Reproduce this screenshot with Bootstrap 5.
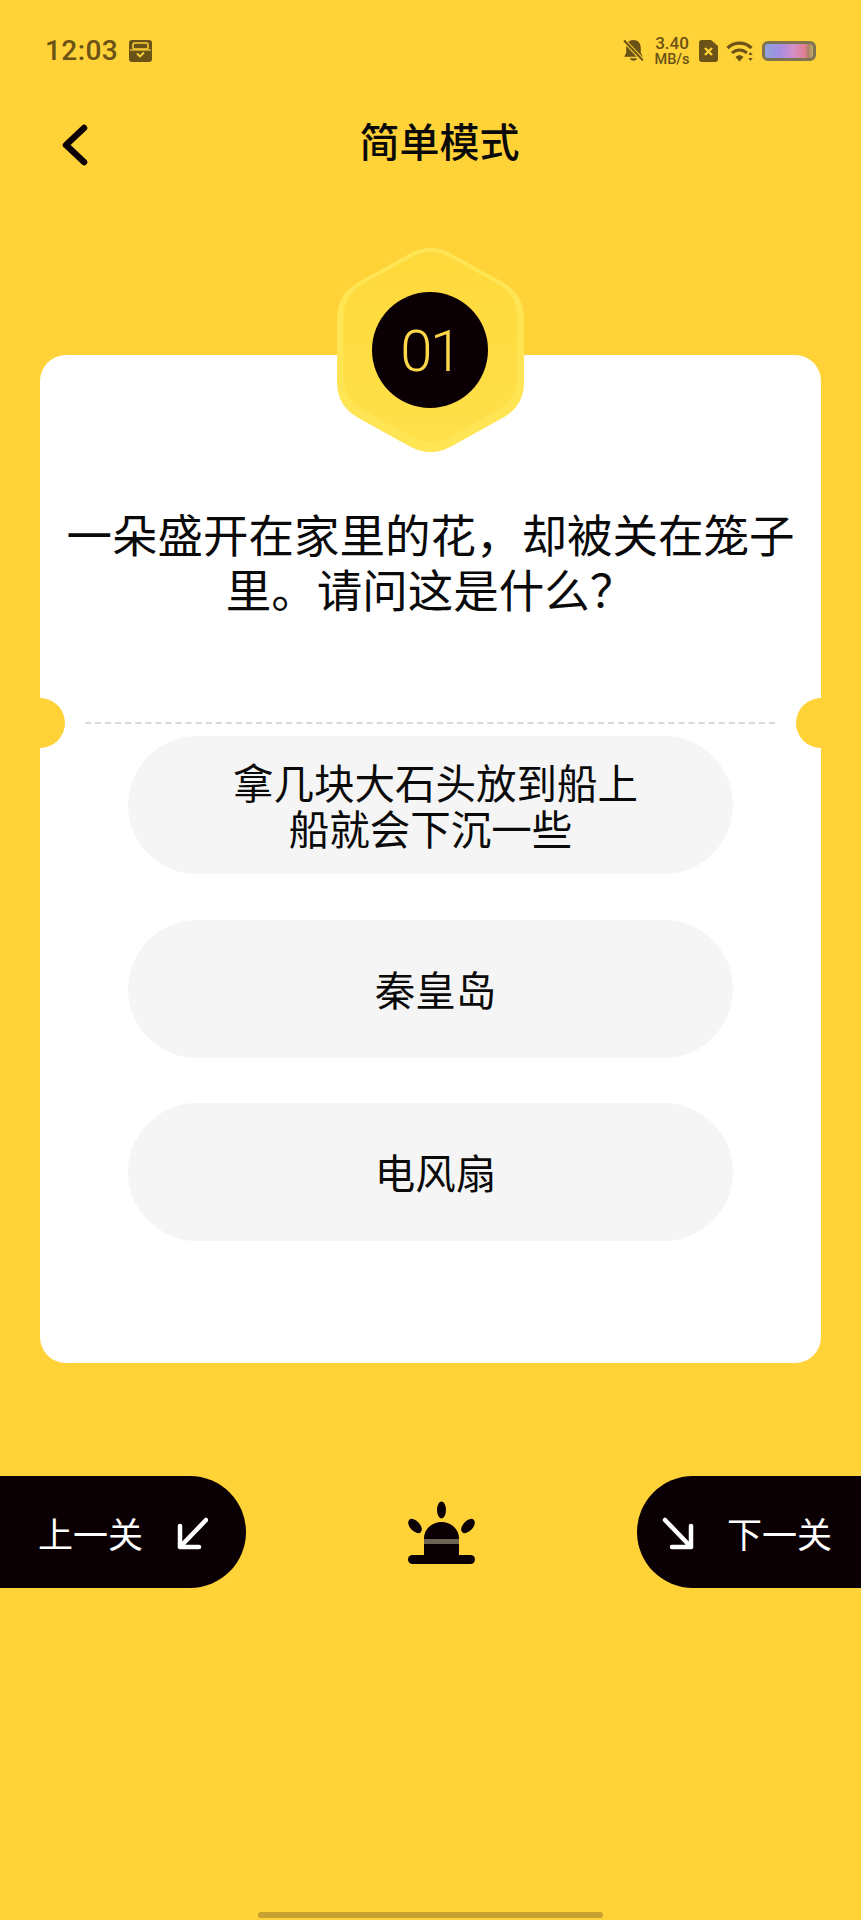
<!DOCTYPE html>
<html lang="zh-CN">
<head>
    <meta charset="UTF-8">
    <meta name="viewport" content="width=device-width, initial-scale=1.0">
    <title>简单模式</title>
    <link href="https://cdn.jsdelivr.net/npm/bootstrap@5.3.0/dist/css/bootstrap.min.css" rel="stylesheet">
    <style>
        :root {
            --bee-yellow: #ffd237;
            --bee-black: #0a0003;
            --bar-brown: #6b5216;
        }
        body {
            background-color: var(--bee-yellow);
            font-family: "Noto Sans CJK SC", "Noto Sans", sans-serif;
            color: #0a0a0a;
        }
        .quiz-page { height: 1920px; }
        .status-strip {
            height: 102px;
            padding: 0 45px 0 45px;
            color: var(--bar-brown);
        }
        .clock-text {
            font-family: Roboto, sans-serif;
            font-weight: 500;
            font-size: 28px;
            line-height: 1;
            letter-spacing: .4px;
        }
        .clock-icon { margin-left: 3px; }
        .speed-text {
            font-family: Roboto, sans-serif;
            font-weight: 500;
            width: 38px;
            text-align: center;
            line-height: 1;
        }
        .speed-text b { display: block; font-weight: 500; font-size: 17px; margin-bottom: 1px; }
        .speed-text i { display: block; font-style: normal; font-size: 14.5px; }
        .battery-box {
            width: 54px;
            height: 20px;
            border: 3px solid #7d7350;
            border-radius: 6px;
            background: linear-gradient(90deg, #8fa3d8 0%, #a48de2 30%, #d18fc8 58%, #e0808f 84%, #a87f68 90%, #c4ab68 100%);
        }
        .title-strip { height: 78px; padding: 0 0 2px 18px; }
        .back-arrow { left: 61px; top: 22px; }
        .page-title {
            font-size: 40px;
            font-weight: 500;
            line-height: 1;
            color: #0a0a0a;
        }
        .quiz-sheet {
            margin: 175px 40px 0;
            height: 1008px;
            padding-top: 151px;
            background: #fff;
            border-radius: 26px;
        }
        .level-hex {
            top: -107px;
            left: 297px;
            width: 187px;
            height: 204px;
        }
        .level-no {
            width: 116px;
            height: 116px;
            top: 44px;
            left: 35px;
            padding-top: 2px;
            background: var(--bee-black);
            color: #ffd84a;
            font-family: Roboto, sans-serif;
            font-weight: 300;
            font-size: 58px;
            letter-spacing: -2.500px;
        }
        .ticket-notch {
            top: 343px;
            width: 25px;
            height: 50px;
            background: var(--bee-yellow);
        }
        .notch-left { left: 0; border-radius: 0 25px 25px 0; }
        .notch-right { right: 0; border-radius: 25px 0 0 25px; }
        .question-text {
            font-size: 45.500px;
            line-height: 55px;
            padding: 0 26px;
        }
        .dash-line {
            margin: 106px 46px 12px 45px;
            border-top: 2px dashed #d9d9d9;
        }
        .answer-list { margin: 0 88px; gap: 45.500px; }
        .answer-pill {
            height: 138px;
            padding-left: 10px;
            background: #f5f5f5;
            border-radius: 69px;
            font-size: 40.500px;
            line-height: 46px;
        }
        .answer-tail { display: block; margin-right: 10px; }
        .bottom-strip { margin-top: 113px; height: 112px; }
        .step-btn {
            height: 112px;
            background: var(--bee-black);
            color: #fff;
            font-size: 35px;
            font-weight: 400;
            line-height: 1;
        }
        .step-btn svg { margin-top: 3px; }
        .step-prev { width: 246px; padding-left: 38px; border-radius: 0 56px 56px 0; gap: 33px; }
        .step-next { width: 224px; padding-left: 25px; border-radius: 56px 0 0 56px; gap: 33px; }
        .home-bar {
            width: 345px;
            height: 6px;
            margin: auto auto 2px 258px;
            background: #c9a032;
            border-radius: 3px;
        }
    </style>
</head>
<body class="m-0">
    <div class="quiz-page d-flex flex-column">
        <!-- status bar -->
        <div class="status-strip d-flex align-items-center justify-content-between">
            <div class="d-flex align-items-center gap-2">
                <span class="clock-text">12:03</span>
                <svg class="clock-icon" width="23" height="22" viewBox="0 0 23 22">
                    <rect width="23" height="22" rx="3" fill="#6b5216"/>
                    <rect x="4" y="3" width="15" height="6" rx="1.500" fill="none" stroke="#ffd237" stroke-width="1.500"/>
                    <path d="M1 10h21" stroke="#ffd237" stroke-width="1.200"/>
                    <path d="M8 13.500l3 3 4-4" fill="none" stroke="#ffd237" stroke-width="1.800"/>
                </svg>
            </div>
            <div class="d-flex align-items-center">
                <svg width="23" height="24" viewBox="0 0 21 23">
                    <path d="M10.500 1c4.500 0 7 3.200 7 7.500v5l2 3.500H1.500l2-3.500v-5C3.500 4.200 6 1 10.500 1z" fill="#6b5216"/>
                    <path d="M7 18.500c.5 3 6.500 3 7 0z" fill="#6b5216"/>
                    <path d="M1.500 1.500l18 19" stroke="#ffd237" stroke-width="4"/>
                    <path d="M1.500 1.500l18 19" stroke="#6b5216" stroke-width="2"/>
                </svg>
                <div class="speed-text ms-2">
                    <b>3.40</b>
                    <i>MB/s</i>
                </div>
                <svg class="ms-2" width="19" height="22" viewBox="0 0 19 22">
                    <path d="M3 0h9l7 6v13a3 3 0 0 1-3 3H3a3 3 0 0 1-3-3V3a3 3 0 0 1 3-3z" fill="#6b5216"/>
                    <path d="M6 8l7 7M13 8l-7 7" stroke="#ffd237" stroke-width="2.400"/>
                </svg>
                <svg class="ms-2" width="28" height="21" viewBox="0 0 28 21">
                    <path d="M1.500 7C8.500 .5 18.500 .5 25.500 7" fill="none" stroke="#6b5216" stroke-width="3.200"/>
                    <path d="M6 12c4.500-4 10.500-4 15 0" fill="none" stroke="#6b5216" stroke-width="3"/>
                    <path d="M9.500 16c2.500-2.200 5.500-2.200 8 0l-4 4.500z" fill="#6b5216"/>
                    <path d="M24.500 11l2.200 3h-4.400zM24.500 20l2.200-3h-4.400z" fill="#6b5216"/>
                </svg>
                <div class="battery-box ms-2"></div>
            </div>
        </div>

        <!-- title -->
        <div class="title-strip position-relative d-flex align-items-center justify-content-center">
            <svg class="back-arrow position-absolute" width="27" height="42" viewBox="0 0 27 42">
                <path d="M23 4L5 21l18 17" fill="none" stroke="#0a0003" stroke-width="6.500" stroke-linecap="round" stroke-linejoin="round"/>
            </svg>
            <h1 class="page-title m-0">简单模式</h1>
        </div>

        <!-- question card -->
        <div class="quiz-sheet position-relative">
            <div class="level-hex position-absolute">
                <svg width="187" height="204" viewBox="0 0 187 204">
                    <defs>
                        <linearGradient id="hexFill" x1="0" y1="0" x2="0" y2="1">
                            <stop offset="0" stop-color="#ffd93b"/>
                            <stop offset="1" stop-color="#ffe04a"/>
                        </linearGradient>
                        <path id="hexShape" d="M72.500 5.700Q93.500-6 114.500 5.700L166 34.300Q187 46 187 70V134Q187 158 166 169.700L114.500 198.300Q93.500 210 72.500 198.300L21 169.700Q0 158 0 134V70Q0 46 21 34.300Z"/>
                    </defs>
                    <use href="#hexShape" fill="#ffe453"/>
                    <use href="#hexShape" fill="url(#hexFill)" transform="translate(93.500 99) scale(.93) translate(-93.500 -102)"/>
                </svg>
                <div class="level-no position-absolute rounded-circle d-flex align-items-center justify-content-center">01</div>
            </div>
            <span class="ticket-notch notch-left position-absolute"></span>
            <span class="ticket-notch notch-right position-absolute"></span>

            <p class="question-text text-center m-0">一朵盛开在家里的花，却被关在笼子里。请问这是什么？</p>
            <div class="dash-line"></div>

            <div class="answer-list d-flex flex-column">
                <div class="answer-pill d-flex align-items-center justify-content-center text-center">
                    <div>拿几块大石头放到船上<span class="answer-tail">船就会下沉一些</span></div>
                </div>
                <div class="answer-pill d-flex align-items-center justify-content-center text-center">秦皇岛</div>
                <div class="answer-pill d-flex align-items-center justify-content-center text-center">电风扇</div>
            </div>
        </div>

        <!-- previous / alarm / next -->
        <div class="bottom-strip d-flex align-items-center justify-content-between">
            <div class="step-btn step-prev d-flex align-items-center">
                <span>上一关</span>
                <svg width="32" height="34" viewBox="0 0 32 34">
                    <path d="M30 3L4 30M4 9v21h19" fill="none" stroke="#fff" stroke-width="4.500" stroke-linecap="round" stroke-linejoin="round"/>
                </svg>
            </div>
            <svg width="67" height="63" viewBox="0 0 67 63">
                <ellipse cx="33.500" cy="9" rx="4.500" ry="8.500" fill="#0a0003"/>
                <ellipse cx="7" cy="25" rx="5" ry="8.500" transform="rotate(-42 7 25)" fill="#0a0003"/>
                <ellipse cx="60" cy="25" rx="5" ry="8.500" transform="rotate(42 60 25)" fill="#0a0003"/>
                <path d="M16 58V37a17.500 16 0 0 1 35 0v21z" fill="#0a0003"/>
                <rect y="54" width="67" height="9" rx="4.500" fill="#0a0003"/>
                <rect x="16" y="38" width="35" height="5" fill="#6c6452"/>
            </svg>
            <div class="step-btn step-next d-flex align-items-center">
                <svg width="32" height="34" viewBox="0 0 32 34">
                    <path d="M3 3l26 27M29 9v21H10" fill="none" stroke="#fff" stroke-width="4.500" stroke-linecap="round" stroke-linejoin="round"/>
                </svg>
                <span>下一关</span>
            </div>
        </div>

        <div class="home-bar"></div>
    </div>

    <script src="https://cdn.jsdelivr.net/npm/bootstrap@5.3.0/dist/js/bootstrap.bundle.min.js"></script>
</body>
</html>
